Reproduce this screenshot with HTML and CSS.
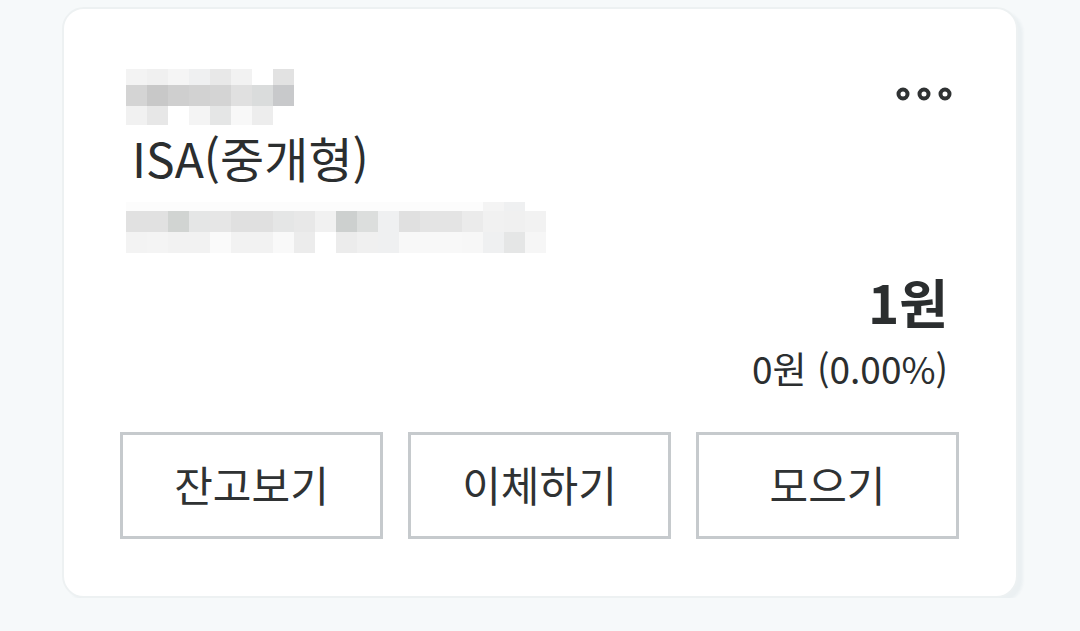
FILE: index.html
```html
<!DOCTYPE html>
<html lang="ko">
<head>
<meta charset="utf-8">
<title>ISA(중개형)</title>
<link rel="stylesheet" href="styles.css">
</head>
<body>
<div class="page">
  <section class="card">
    <div class="head">
      <div class="head-left">
        <div class="mosaic mosaic-name">
          <span class="s-f3"></span><span class="s-f0"></span><span class="s-f5"></span><span class="s-ef"></span><span class="s-e8"></span><span class="s-f2"></span><span class="s-ff"></span><span class="s-e2"></span>
          <span class="s-d4"></span><span class="s-c8"></span><span class="s-cf"></span><span class="s-d2"></span><span class="s-d4"></span><span class="s-e0"></span><span class="s-da"></span><span class="s-c9"></span>
          <span class="s-f1"></span><span class="s-e7"></span><span class="s-ff"></span><span class="s-f4"></span><span class="s-e5"></span><span class="s-f8"></span><span class="s-ed"></span><span class="s-ff"></span>
        </div>
        <h1 class="title">ISA(중개형)</h1>
        <div class="mosaic mosaic-acct">
          <span class="s-fd"></span><span class="s-fd"></span><span class="s-fd"></span><span class="s-fd"></span><span class="s-fd"></span><span class="s-fd"></span><span class="s-fd"></span><span class="s-fd"></span><span class="s-fd"></span><span class="s-fd"></span>
          <span class="s-fd"></span><span class="s-fd"></span><span class="s-fd"></span><span class="s-fd"></span><span class="s-fd"></span><span class="s-fd"></span><span class="s-fd"></span><span class="s-f4"></span><span class="s-ef"></span><span class="s-ff"></span>
          <span class="s-e1"></span><span class="s-e1"></span><span class="s-d1"></span><span class="s-e5"></span><span class="s-e6"></span><span class="s-e0"></span><span class="s-e0"></span><span class="s-e5"></span><span class="s-e8"></span><span class="s-f1"></span>
          <span class="s-cd"></span><span class="s-dc"></span><span class="s-ef"></span><span class="s-e0"></span><span class="s-e4"></span><span class="s-e4"></span><span class="s-eb"></span><span class="s-f1"></span><span class="s-f0"></span><span class="s-f2"></span>
          <span class="s-f3"></span><span class="s-f4"></span><span class="s-f2"></span><span class="s-f2"></span><span class="s-fa"></span><span class="s-f2"></span><span class="s-f2"></span><span class="s-f9"></span><span class="s-ec"></span><span class="s-ff"></span>
          <span class="s-ec"></span><span class="s-f0"></span><span class="s-ef"></span><span class="s-f8"></span><span class="s-f8"></span><span class="s-f8"></span><span class="s-f7"></span><span class="s-ef"></span><span class="s-e5"></span><span class="s-f6"></span>
        </div>
      </div>
      <button class="more" type="button" aria-label="더보기">
        <svg width="60" height="16" viewBox="0 0 60 16" aria-hidden="true">
          <circle cx="7" cy="8" r="4.5" fill="none" stroke="#2f3233" stroke-width="4"/>
          <circle cx="28" cy="8" r="4.5" fill="none" stroke="#2f3233" stroke-width="4"/>
          <circle cx="49" cy="8" r="4.5" fill="none" stroke="#2f3233" stroke-width="4"/>
        </svg>
      </button>
    </div>
    <div class="amounts">
      <div class="balance">1원</div>
      <div class="change">0원 (0.00%)</div>
    </div>
    <div class="actions">
      <button class="action" type="button">잔고보기</button>
      <button class="action" type="button">이체하기</button>
      <button class="action" type="button">모으기</button>
    </div>
  </section>
</div>
</body>
</html>
```

FILE: styles.css
```css
html, body {
  margin: 0;
  padding: 0;
  background: #f6f9fa;
}

body {
  font-family: "Noto Sans CJK KR", "Noto Sans", sans-serif;
  color: #2b2e2f;
}

.page {
  padding: 7px 0 0 62px;
}

.card {
  box-sizing: border-box;
  width: 956px;
  background: #ffffff;
  border: 2px solid #edf1f2;
  border-radius: 22px;
  box-shadow: 5px 4px 3px rgba(40, 70, 90, 0.05);
  padding: 60px 56px 57px 56px;
}

.head {
  display: flex;
  justify-content: space-between;
  align-items: flex-start;
}

.head-left {
  display: flex;
  flex-direction: column;
  align-items: flex-start;
}

.mosaic {
  display: grid;
  grid-auto-columns: 21px;
}

.mosaic-name {
  margin-left: 6px;
  grid-template-columns: repeat(8, 21px);
  grid-template-rows: 16px 21px 19px;
}

.mosaic-acct {
  margin-left: 6px;
  margin-top: 18px;
  grid-template-columns: repeat(20, 21px);
  grid-template-rows: 9px 21px 21px;
}

.title {
  margin: 5px 0 0 12px;
  font-size: 48px;
  line-height: 54px;
  font-weight: 400;
  color: #2b2e2f;
}

.more {
  margin: 17px 4px 0 0;
  padding: 0;
  border: 0;
  background: none;
  display: flex;
}

.amounts {
  display: flex;
  flex-direction: column;
  align-items: flex-end;
  padding-right: 12px;
  margin-top: 18px;
}

.balance {
  font-size: 53px;
  line-height: 60px;
  font-weight: 700;
  color: #2b2e2f;
}

.change {
  margin-top: 15px;
  font-size: 37px;
  line-height: 44px;
  color: #2b2e2f;
}

.actions {
  display: flex;
  gap: 25px;
  margin-top: 42px;
}

.action {
  box-sizing: border-box;
  flex: 0 0 263px;
  height: 107px;
  background: #ffffff;
  border: 3px solid #c6cacd;
  border-radius: 0;
  font-family: "Noto Sans CJK KR", "Noto Sans", sans-serif;
  font-size: 42px;
  font-weight: 400;
  color: #2f3233;
  padding: 0 0 4px 0;
}

.s-c8 { background: #c8c8c8; }
.s-c9 { background: #c8c9cb; }
.s-cd { background: #cdd0cf; }
.s-cf { background: #cfcfcf; }
.s-d1 { background: #d1d4d2; }
.s-d2 { background: #d2d2d2; }
.s-d4 { background: #d4d4d4; }
.s-da { background: #dadcdc; }
.s-dc { background: #dcdedd; }
.s-e0 { background: #e0e0e0; }
.s-e1 { background: #e1e1e1; }
.s-e2 { background: #e2e2e2; }
.s-e4 { background: #e4e4e4; }
.s-e5 { background: #e5e6e6; }
.s-e6 { background: #e6e6e6; }
.s-e7 { background: #e7e7e7; }
.s-e8 { background: #e8e8e8; }
.s-eb { background: #ebebeb; }
.s-ec { background: #ececec; }
.s-ed { background: #ededed; }
.s-ef { background: #eff0f1; }
.s-f0 { background: #f0f0f0; }
.s-f1 { background: #f1f1f1; }
.s-f2 { background: #f2f2f2; }
.s-f3 { background: #f3f3f3; }
.s-f4 { background: #f4f4f4; }
.s-f5 { background: #f5f5f5; }
.s-f6 { background: #f6f6f6; }
.s-f7 { background: #f7f7f7; }
.s-f8 { background: #f8f8f8; }
.s-f9 { background: #f9f9f9; }
.s-fa { background: #fafafa; }
.s-fd { background: #fcfcfc; }
.s-ff { background: #ffffff; }
```
